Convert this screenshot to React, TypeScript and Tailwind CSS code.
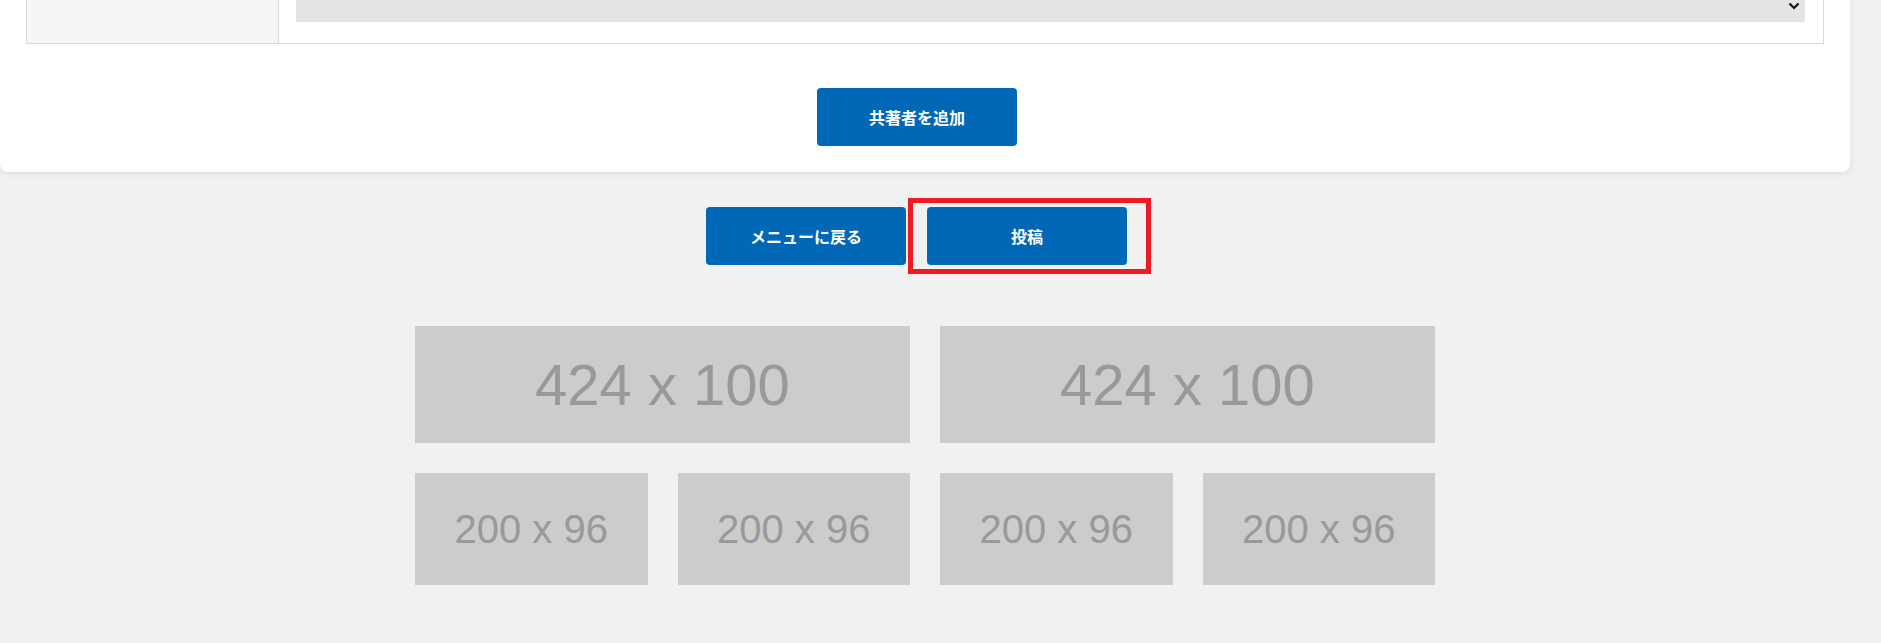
import React from "react";

const sans = "font-['Noto_Sans_CJK_JP',sans-serif]";

function Placeholder({ label, big }: { label: string; big?: boolean }) {
  return (
    <div
      className={`flex items-center justify-center bg-[#cccccc] text-[#999999] font-['Liberation_Sans',Arial,sans-serif] ${
        big ? "h-[117px] text-[58px]" : "h-[112px] text-[40px]"
      }`}
    >
      {label}
    </div>
  );
}

function BlueButton({ children }: { children: React.ReactNode }) {
  return (
    <button
      type="button"
      className={`flex h-[58px] w-[200px] items-center justify-center rounded-[4px] bg-[#0068b6] text-[16px] font-bold text-white ${sans}`}
    >
      {children}
    </button>
  );
}

export default function App() {
  return (
    <div className="min-h-screen overflow-hidden bg-[#f1f1f1]">
      <div className="w-[1850px]">
        {/* form card, scrolled so only its bottom is visible */}
        <div className="-mt-[31px] rounded-b-lg bg-white px-[26px] pb-[26px] shadow-[0_2px_6px_rgba(0,0,0,0.08)]">
          <div className="flex border border-[#d9d9d9]">
            <div className="w-[252px] shrink-0 border-r border-[#d9d9d9] bg-[#f5f5f5]" />
            <div className="flex-1 pt-[20px] pb-[21px] pl-[17px] pr-[18px]">
              <div className="flex h-[32px] items-center justify-end bg-[#e4e4e4] pr-[5px]">
                <svg width="12" height="8" viewBox="0 0 12 8" fill="none">
                  <path d="M1.5 1.5L6 6l4.5-4.5" stroke="#111" strokeWidth="2.2" />
                </svg>
              </div>
            </div>
          </div>

          <div className="mt-[44px] flex justify-center pr-[16px]">
            <BlueButton>共著者を追加</BlueButton>
          </div>
        </div>

        <div className="mt-[35px] flex justify-center gap-[21px] pr-[17px]">
          <BlueButton>メニューに戻る</BlueButton>
          <div className="relative">
            <BlueButton>投稿</BlueButton>
            <span className="pointer-events-none absolute -left-[19px] -top-[9px] h-[76px] w-[243px] border-[5px] border-[#ed1c24]" />
          </div>
        </div>

        <div className="mx-auto mt-[61px] w-[1020px] space-y-[30px]">
          <div className="grid grid-cols-2 gap-[30px]">
            <Placeholder label="424 x 100" big />
            <Placeholder label="424 x 100" big />
          </div>
          <div className="grid grid-cols-4 gap-[30px]">
            <Placeholder label="200 x 96" />
            <Placeholder label="200 x 96" />
            <Placeholder label="200 x 96" />
            <Placeholder label="200 x 96" />
          </div>
        </div>
      </div>
    </div>
  );
}
